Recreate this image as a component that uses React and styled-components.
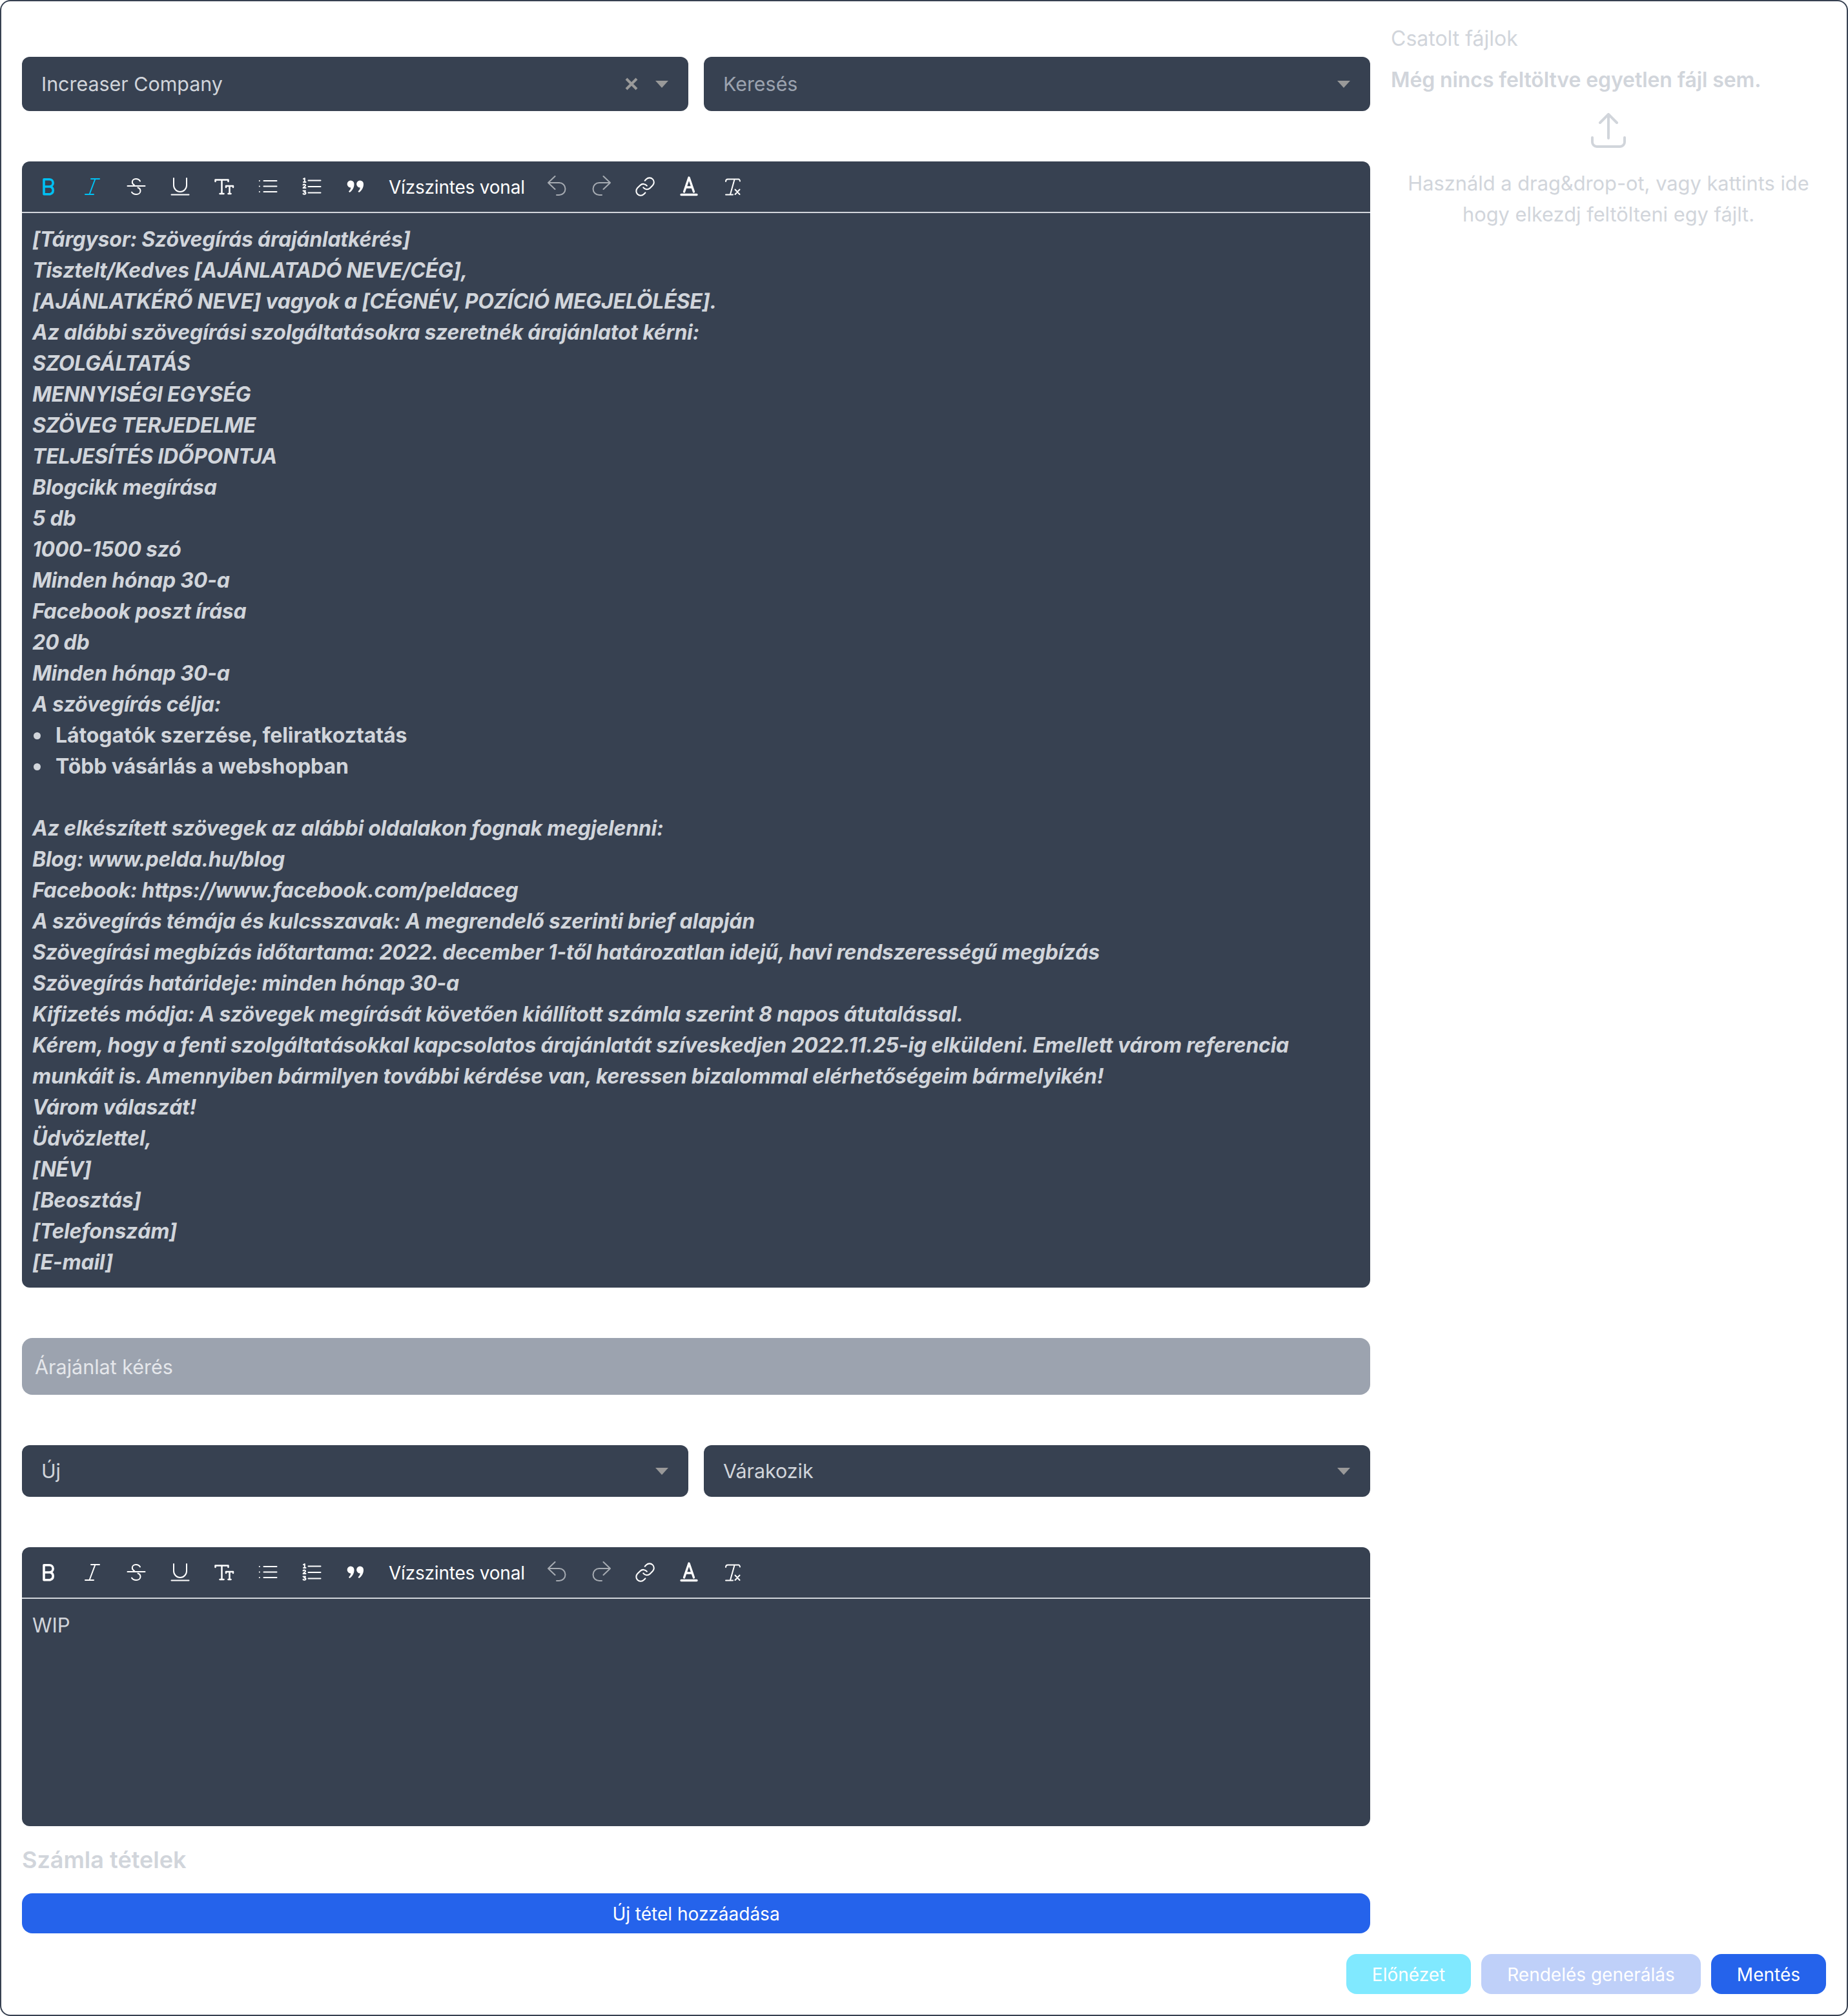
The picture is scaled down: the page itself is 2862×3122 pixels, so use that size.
import React from 'react';
import styled, { createGlobalStyle } from 'styled-components';

const GlobalStyle = createGlobalStyle`
  html, body { margin: 0; padding: 0; background: #fff; }
  * { box-sizing: border-box; }
  body { font-family: Inter, "Liberation Sans", sans-serif; -webkit-font-smoothing: antialiased; }
`;

const Page = styled.div`
  width: 2862px;
  height: 3122px;
  border: 2px solid #374151;
  border-radius: 16px;
  padding: 32px;
  display: flex;
  flex-direction: column;
  gap: 32px;
  background: #fff;
`;

const Columns = styled.div`
  display: grid;
  grid-template-columns: 2088px 674px;
  column-gap: 32px;
`;

const Main = styled.div`
  padding-top: 54px;
  display: flex;
  flex-direction: column;
`;

const SelectRow = styled.div`
  display: grid;
  grid-template-columns: 1fr 1fr;
  column-gap: 24px;
  margin-bottom: 78px;
`;

const SelectBox = styled.div`
  height: ${p => p.$height}px;
  background: #374151;
  border-radius: 12px;
  padding: 0 31px 0 30px;
  display: flex;
  align-items: center;
  font-size: 30.400px;
  color: ${p => (p.$placeholder ? '#9ca3af' : '#d1d5db')};
`;

const SelectValue = styled.span`
  flex: 1;
`;

const ClearMark = styled.svg`
  width: 20px;
  height: 20px;
  margin-right: 27px;
  stroke: #9a9a9a;
  stroke-width: 4;
  fill: none;
`;

const Caret = styled.span`
  width: 0;
  height: 0;
  border-left: 10px solid transparent;
  border-right: 10px solid transparent;
  border-top: 11px solid #999;
`;

const Editor = styled.div`
  height: ${p => p.$height}px;
  background: #374151;
  border-radius: 12px;
  display: flex;
  flex-direction: column;
  overflow: hidden;
  margin-bottom: ${p => p.$gap}px;
`;

const Toolbar = styled.div`
  height: 80px;
  flex: none;
  border-bottom: 2px solid #d1d5db;
  padding-left: 7px;
  display: flex;
  align-items: center;
`;

const ToolIcon = styled.svg`
  width: 34px;
  height: 34px;
  margin: 0 17px;
  flex: none;
  fill: none;
  stroke-linecap: round;
  stroke-linejoin: round;
  color: ${p => (p.$active ? '#00c0f3' : p.$muted ? '#a6abb2' : '#fff')};
  stroke: currentColor;
  stroke-width: 2;
`;

const ToolText = styled.span`
  margin: 2px 16px 0 17px;
  font-size: 28px;
  line-height: 34px;
  letter-spacing: -0.2px;
  color: #fff;
  white-space: nowrap;
`;

const Body = styled.div`
  padding: 17px 16px 15px;
  font-size: ${p => (p.$rich ? 32 : 31)}px;
  line-height: 48px;
  color: #d1d5db;
  ${p => p.$rich && 'font-weight: 700; font-style: italic; letter-spacing: -0.24px;'}
`;

const Line = styled.div`
  min-height: 48px;
`;

const Bullets = styled.ul`
  margin: 0;
  padding: 0;
  list-style: none;
  font-style: normal;
  letter-spacing: -0.1px;
`;

const Bullet = styled.li`
  display: flex;
  align-items: center;

  &::before {
    content: '';
    width: 11px;
    height: 11px;
    margin: 0 23px 0 2px;
    border-radius: 50%;
    background: currentColor;
  }
`;

const TitleInput = styled.div`
  height: 88px;
  margin-bottom: 78px;
  background: #9ca3af;
  border-radius: 16px;
  padding: 0 20px;
  display: flex;
  align-items: center;
  font-size: 30.500px;
  color: #e5e7eb;
`;

const SectionTitle = styled.h3`
  margin: 32px 0;
  font-size: 36px;
  line-height: 40px;
  font-weight: 600;
  color: #d1d5db;
`;

const AddButton = styled.div`
  height: 62px;
  padding-top: 2px;
  background: #2563eb;
  border-radius: 16px;
  display: flex;
  align-items: center;
  justify-content: center;
  font-size: 28px;
  font-weight: 400;
  color: #fff;
`;

const Side = styled.aside`
  padding-top: 2px;
  color: #d1d5db;
  font-size: 32px;
  line-height: 48px;
`;

const SideTitle = styled.div`
  margin-bottom: 16px;
`;

const SideEmpty = styled.div`
  font-weight: 600;
  letter-spacing: -0.1px;
`;

const UploadIcon = styled.svg`
  display: block;
  width: 54px;
  height: 54px;
  margin: 27px auto 31px;
  fill: none;
  stroke: #d1d5db;
  stroke-width: 4;
  stroke-linecap: round;
  stroke-linejoin: round;
`;

const SideHint = styled.div`
  text-align: center;
  font-size: 30.800px;
`;

const Footer = styled.div`
  display: flex;
  justify-content: flex-end;
  gap: 16px;
`;

const FooterButton = styled.div`
  height: 62px;
  padding: 2px 40px 0;
  border-radius: 16px;
  display: flex;
  align-items: center;
  font-size: 28px;
  font-weight: 400;
  color: #fff;
  background: ${p => p.$bg};
`;

const icons = {
  bold: <path strokeWidth="3.6" d="M8 3.7h8.500a5.600 5.600 0 0 1 0 11.300H8zM8 15h9.500a6 6 0 0 1 0 11.700H8z" />,
  italic: <path d="M13 3h13M4 27h13M19.500 3l-9 24" />,
  strike: <path d="M21 6.500C19.500 3.800 17 3 14.500 3 11 3 8.800 5.400 8.800 8c0 2.400 1.400 3.800 3.400 4.800M1.500 14h27M17.500 16.500c2.600.9 4 2.800 4 5.300 0 3-2.800 5.200-6.500 5.200-3 0-5.500-1-7-3.500" />,
  underline: <path d="M5 2v11a10 10 0 0 0 20 0V2M1.500 27.500h27" />,
  size: <path strokeWidth="2.500" d="M1.500 7V4.500h20V7M11.500 4.500V26M8.500 26h6M18 16v-2h11v2M23.500 14v12M21.500 26h4" />,
  bullets: <path d="M8.500 6h20M8.500 14.500h20M8.500 23h20M1.800 6h.1M1.800 14.500h.1M1.800 23h.1" />,
  numbers: <path d="M9.500 5.500h19M9.500 15h19M9.500 24.500h19M2 3l1.800-1v6M2 8h3.500M1.500 12.500c1-1.500 4-1 3.500 1-.3 1-2.500 2-3.500 3.500h4M1.500 21.500h3.500l-1.800 2c1.500 0 2.300.7 2.300 1.700 0 1.800-3 2-4 .8" />,
  quote: (
    <path
      stroke="none"
      fill="currentColor"
      d="M7 5.500a5.500 5.500 0 0 1 5.500 5.500c0 6-3 10.500-7 13l-1.500-1.500c2-2 3-3.500 3.300-6A5.500 5.500 0 0 1 7 5.500zM21.500 5.500A5.500 5.500 0 0 1 27 11c0 6-3 10.500-7 13l-1.500-1.500c2-2 3-3.500 3.300-6a5.500 5.500 0 0 1-.3-11z"
    />
  ),
  undo: <path d="M1 9h17a9.500 9.500 0 0 1 0 19h-4M1 9L11.500-1M1 9l10.500 10" />,
  redo: <path d="M29 9H12a9.500 9.500 0 0 0 0 19h4M29 9L18.500-1M29 9L18.500 19" />,
  link: (
    <g transform="translate(-1.500 -1.500) scale(1.380)" strokeWidth="1.500">
      <path d="M10 13a5 5 0 0 0 7.540.54l3-3a5 5 0 0 0-7.070-7.070l-1.720 1.710" />
      <path d="M14 11a5 5 0 0 0-7.540-.54l-3 3a5 5 0 0 0 7.070 7.070l1.710-1.710" />
    </g>
  ),
  color: <path strokeWidth="3.400" d="M7.500 23L15 1l7.500 22M10 16h10M3 27.500h24" />,
  clear: <path d="M4 7c0-2 1-3.500 3-3.500h17c1 0 1.500 1 2 3M17.500 4L11 27M4 27.500h11M18.500 19.500l7 7.500M25.500 19.500l-7 7.500" />,
};

const EditorToolbar = ({ activeBold, activeItalic }) => {
  const tool = (name, props) => (
    <ToolIcon key={name} viewBox="-2 -2 34 34" {...props}>
      {icons[name]}
    </ToolIcon>
  );
  return (
    <Toolbar>
      {tool('bold', { $active: activeBold })}
      {tool('italic', { $active: activeItalic })}
      {tool('strike')}
      {tool('underline')}
      {tool('size')}
      {tool('bullets')}
      {tool('numbers')}
      {tool('quote')}
      <ToolText>Vízszintes vonal</ToolText>
      {tool('undo', { $muted: true })}
      {tool('redo', { $muted: true })}
      {tool('link')}
      {tool('color')}
      {tool('clear')}
    </Toolbar>
  );
};

const Select = ({ value, placeholder, clearable, height }) => (
  <SelectBox $height={height} $placeholder={placeholder}>
    <SelectValue>{value}</SelectValue>
    {clearable && (
      <ClearMark viewBox="0 0 20 20">
        <path d="M2 2l16 16M18 2L2 18" />
      </ClearMark>
    )}
    <Caret />
  </SelectBox>
);

const introLines = [
  '[Tárgysor: Szövegírás árajánlatkérés]',
  'Tisztelt/Kedves [AJÁNLATADÓ NEVE/CÉG],',
  '[AJÁNLATKÉRŐ NEVE] vagyok a [CÉGNÉV, POZÍCIÓ MEGJELÖLÉSE].',
  'Az alábbi szövegírási szolgáltatásokra szeretnék árajánlatot kérni:',
  'SZOLGÁLTATÁS',
  'MENNYISÉGI EGYSÉG',
  'SZÖVEG TERJEDELME',
  'TELJESÍTÉS IDŐPONTJA',
  'Blogcikk megírása',
  '5 db',
  '1000-1500 szó',
  'Minden hónap 30-a',
  'Facebook poszt írása',
  '20 db',
  'Minden hónap 30-a',
  'A szövegírás célja:',
];

const closingLines = [
  '',
  'Az elkészített szövegek az alábbi oldalakon fognak megjelenni:',
  'Blog: www.pelda.hu/blog',
  'Facebook: https://www.facebook.com/peldaceg',
  'A szövegírás témája és kulcsszavak: A megrendelő szerinti brief alapján',
  'Szövegírási megbízás időtartama: 2022. december 1-től határozatlan idejű, havi rendszerességű megbízás',
  'Szövegírás határideje: minden hónap 30-a',
  'Kifizetés módja: A szövegek megírását követően kiállított számla szerint 8 napos átutalással.',
  'Kérem, hogy a fenti szolgáltatásokkal kapcsolatos árajánlatát szíveskedjen 2022.11.25-ig elküldeni. Emellett várom referencia munkáit is. Amennyiben bármilyen további kérdése van, keressen bizalommal elérhetőségeim bármelyikén!',
  'Várom válaszát!',
  'Üdvözlettel,',
  '[NÉV]',
  '[Beosztás]',
  '[Telefonszám]',
  '[E-mail]',
];

const App = () => (
  <Page>
    <GlobalStyle />
    <Columns>
      <Main>
        <SelectRow>
          <Select value="Increaser Company" clearable height={84} />
          <Select value="Keresés" placeholder height={84} />
        </SelectRow>

        <Editor $height={1744} $gap={78}>
          <EditorToolbar activeBold activeItalic />
          <Body $rich>
            {introLines.map((text, i) => (
              <Line key={i}>{text}</Line>
            ))}
            <Bullets>
              <Bullet>Látogatók szerzése, feliratkoztatás</Bullet>
              <Bullet>Több vásárlás a webshopban</Bullet>
            </Bullets>
            {closingLines.map((text, i) => (
              <Line key={i}>{text}</Line>
            ))}
          </Body>
        </Editor>

        <TitleInput>Árajánlat kérés</TitleInput>

        <SelectRow>
          <Select value="Új" height={80} />
          <Select value="Várakozik" height={80} />
        </SelectRow>

        <Editor $height={432} $gap={0}>
          <EditorToolbar />
          <Body>WIP</Body>
        </Editor>

        <SectionTitle>Számla tételek</SectionTitle>
        <AddButton>Új tétel hozzáadása</AddButton>
      </Main>

      <Side>
        <SideTitle>Csatolt fájlok</SideTitle>
        <SideEmpty>Még nincs feltöltve egyetlen fájl sem.</SideEmpty>
        <UploadIcon viewBox="0 0 54 54">
          <path d="M27 39V3M14 15L27 2l13 13M2 38v7a7 7 0 0 0 7 7h36a7 7 0 0 0 7-7v-7" />
        </UploadIcon>
        <SideHint>
          Használd a drag&amp;drop-ot, vagy kattints ide
          <br />
          hogy elkezdj feltölteni egy fájlt.
        </SideHint>
      </Side>
    </Columns>

    <Footer>
      <FooterButton $bg="#80e9ff">Előnézet</FooterButton>
      <FooterButton $bg="#bfd0f9">Rendelés generálás</FooterButton>
      <FooterButton $bg="#2563eb">Mentés</FooterButton>
    </Footer>
  </Page>
);

export default App;
